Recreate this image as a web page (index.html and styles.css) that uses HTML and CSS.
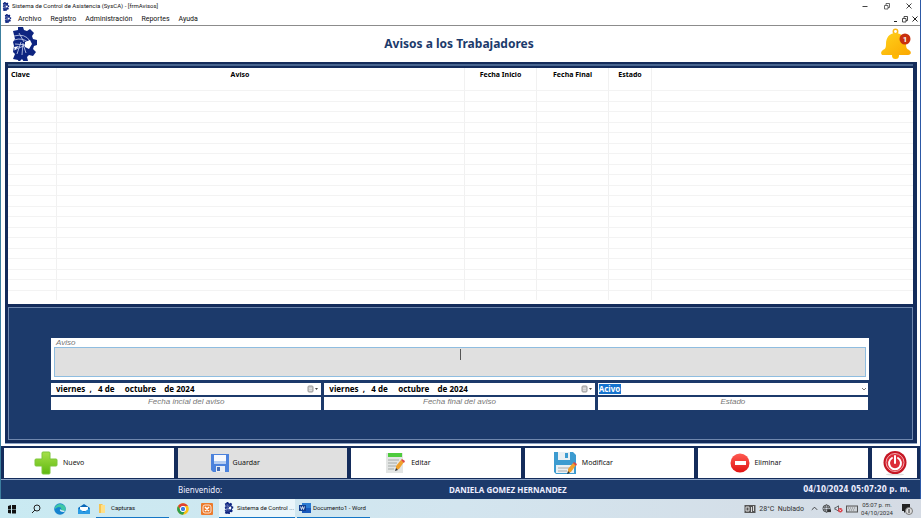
FILE: index.html
```html
<!DOCTYPE html>
<html lang="es">
<head>
<meta charset="utf-8">
<title>Sistema de Control de Asistencia (SysCA) - [frmAvisos]</title>
<link rel="stylesheet" href="styles.css">
</head>
<body>
<svg class="defs" aria-hidden="true">
  <symbol id="gear" viewBox="0 0 24 34">
    <path fill="#0d2480" d="M0 4l5-1V0h5l1 3 3 1 3-2 4 4-2 3 1 3 4 1v5l-3 1-1 3 3 3-3 4-4-1-2 2 1 4-4 1-2-3-2 2-1 2H6l-1-3-5-1 2-5-2-2 1-6-1-4 2-3z"/>
    <path fill="none" stroke="#cdd6f0" stroke-width=".8" d="M1 9q11-3 16 5M1 13q9-3 15 3M2 17l12 1M4 27l4-12M9 28l1-12M1 23l12-5M6 6l5 9M13 26l-3-9"/>
    <path fill="#fff" d="M12 15l5-2 2 4-3 5-4-2zM1 20l5-1-4 4z"/>
  </symbol>
  <symbol id="restore" viewBox="0 0 8 8"><path fill="none" stroke="currentColor" stroke-width=".8" d="M1.500 3.500h3.500v3.500h-3.500zM3 3V1.500h3.500v4H5"/></symbol>
  <symbol id="close" viewBox="0 0 8 8"><path fill="none" stroke="currentColor" d="M1.500 1.500l5 5M6.500 1.500l-5 5"/></symbol>
  <symbol id="minimize" viewBox="0 0 8 8"><path fill="none" stroke="currentColor" d="M1.500 4.500h5"/></symbol>
  <symbol id="calendar" viewBox="0 0 12 8"><rect x="1" y="1" width="5" height="6" rx="1" fill="#ccc" stroke="#999"/><path d="M2 3.500h3M2 5.500h3" stroke="#ddd"/><path fill="#444" d="M8 3h3L9.500 5z"/></symbol>
</svg>

<div class="window">
  <header class="titlebar">
    <svg class="gear-small"><use href="#gear"/></svg>
    <span class="caption">Sistema de Control de Asistencia (SysCA) - [frmAvisos]</span>
    <div class="controls">
      <button aria-label="Minimizar"><svg><use href="#minimize"/></svg></button>
      <button aria-label="Restaurar"><svg><use href="#restore"/></svg></button>
      <button aria-label="Cerrar"><svg><use href="#close"/></svg></button>
    </div>
  </header>
  <nav class="menubar">
    <svg class="gear-small"><use href="#gear"/></svg>
    <a href="#">Archivo</a><a href="#">Registro</a><a href="#">Administración</a><a href="#">Reportes</a><a href="#">Ayuda</a>
    <div class="controls child">
      <button aria-label="Minimizar ventana"><svg viewBox="0 0 8 8"><path d="M3 6.500h3" stroke="currentColor"/></svg></button>
      <button aria-label="Restaurar ventana"><svg><use href="#restore"/></svg></button>
      <button aria-label="Cerrar ventana"><svg><use href="#close"/></svg></button>
    </div>
  </nav>

  <div class="heading">
    <svg class="logo"><use href="#gear"/></svg>
    <h1>Avisos a los Trabajadores</h1>
    <button class="bell" aria-label="Notificaciones">
      <svg viewBox="0 0 30 32">
        <defs><linearGradient id="gold" x2="1" y2="1"><stop stop-color="#ffd21c"/><stop offset="1" stop-color="#fba800"/></linearGradient></defs>
        <circle cx="14.500" cy="3.500" r="2.200" fill="none" stroke="#fdb913" stroke-width="1.500"/>
        <circle cx="14.500" cy="27.500" r="3.500" fill="#ffb900"/>
        <path fill="url(#gold)" d="M14.500 5C8 5 5 10 5 16c0 4-1 5-3 6-3 2-2 5 0 5h25c3 0 4-3 1-5-2-1-3-2-3-6 0-6-4-11-10.500-11z"/>
        <circle cx="24" cy="11" r="5.500" fill="#c9300e"/>
        <text class="badge" x="24" y="14" text-anchor="middle">1</text>
      </svg>
    </button>
  </div>

  <main class="frame">
    <div class="list">
      <table>
        <colgroup><col class="c-key"><col class="c-notice"><col class="c-date"><col class="c-date"><col class="c-state"><col></colgroup>
        <thead><tr><th class="left">Clave</th><th class="notice">Aviso</th><th>Fecha Inicio</th><th>Fecha Final</th><th>Estado</th><th></th></tr></thead>
        <tbody>
          <tr><td></td><td></td><td></td><td></td><td></td><td></td></tr>
          <tr><td></td><td></td><td></td><td></td><td></td><td></td></tr>
          <tr><td></td><td></td><td></td><td></td><td></td><td></td></tr>
          <tr><td></td><td></td><td></td><td></td><td></td><td></td></tr>
          <tr><td></td><td></td><td></td><td></td><td></td><td></td></tr>
          <tr><td></td><td></td><td></td><td></td><td></td><td></td></tr>
          <tr><td></td><td></td><td></td><td></td><td></td><td></td></tr>
          <tr><td></td><td></td><td></td><td></td><td></td><td></td></tr>
          <tr><td></td><td></td><td></td><td></td><td></td><td></td></tr>
          <tr><td></td><td></td><td></td><td></td><td></td><td></td></tr>
          <tr><td></td><td></td><td></td><td></td><td></td><td></td></tr>
          <tr><td></td><td></td><td></td><td></td><td></td><td></td></tr>
          <tr><td></td><td></td><td></td><td></td><td></td><td></td></tr>
          <tr><td></td><td></td><td></td><td></td><td></td><td></td></tr>
          <tr><td></td><td></td><td></td><td></td><td></td><td></td></tr>
          <tr><td></td><td></td><td></td><td></td><td></td><td></td></tr>
          <tr><td></td><td></td><td></td><td></td><td></td><td></td></tr>
          <tr><td></td><td></td><td></td><td></td><td></td><td></td></tr>
          <tr><td></td><td></td><td></td><td></td><td></td><td></td></tr>
          <tr><td></td><td></td><td></td><td></td><td></td><td></td></tr>
          <tr><td></td><td></td><td></td><td></td><td></td><td></td></tr>
        </tbody>
      </table>
    </div>
    <form class="panel">
      <div class="group">
        <label for="aviso">Aviso</label>
        <div class="memo"><textarea id="aviso"></textarea><span class="caret"></span></div>
      </div>
      <div class="fields">
        <div class="field">
          <div class="box"><input id="inicio" type="text" value="viernes  ,   4 de     octubre    de 2024"><svg class="cal"><use href="#calendar"/></svg></div>
          <label for="inicio">Fecha incial del aviso</label>
        </div>
        <div class="field">
          <div class="box"><input id="final" type="text" value="viernes  ,   4 de     octubre    de 2024"><svg class="cal"><use href="#calendar"/></svg></div>
          <label for="final">Fecha final del aviso</label>
        </div>
        <div class="field">
          <div class="box"><select id="estado"><option>Acivo</option></select><svg class="chev" viewBox="0 0 8 8"><path fill="none" stroke="#777" d="M2 3l2 2 2-2"/></svg></div>
          <label for="estado">Estado</label>
        </div>
      </div>
    </form>
  </main>

  <div class="actions">
    <button class="action new">
      <svg viewBox="0 0 24 24"><defs><linearGradient id="green" x2="0" y2="1"><stop stop-color="#a6e04a"/><stop offset="1" stop-color="#5fb80e"/></linearGradient></defs><path fill="url(#green)" stroke="#7cc63a" d="M9 1h6q1 0 1 1v6h6q1 0 1 1v5q0 1-1 1h-6v7q0 1-1 1H9q-1 0-1-1v-7H2q-1 0-1-1V9q0-1 1-1h6V2q0-1 1-1z"/></svg>Nuevo</button>
    <button class="action save">
      <svg viewBox="0 0 20 20"><path fill="#4c82dc" d="M1 1h18v18H3l-2-2z"/><path fill="#f7f9fd" d="M4 2h12v9H4z"/><path fill="#b5cdf2" d="M4 8h12v3H4z"/><path fill="#e9edf4" d="M6 13h9v6H6z"/><path fill="#466eb6" d="M7 14h3v4H7z"/></svg>Guardar</button>
    <button class="action edit">
      <svg viewBox="0 0 20 22"><path fill="#e3e5e4" d="M1 1h17v20H1z"/><path fill="#4ecb3d" d="M3 1h14v4H3z"/><path stroke="#a4aaa8" d="M3 8h11M3 11h9M3 14h8M3 17h6"/><path fill="#f0a12d" d="M11 14l5-6 3 2-5 7-3 1z"/><path fill="#dd4643" d="M16 8l1-1 3 2-1 2z"/><path fill="#333" d="M10 19l1-3 2 2z"/></svg>Editar</button>
    <button class="action modify">
      <svg viewBox="0 0 24 24"><path fill="#3c9bd0" d="M1 1h19l3 3v19H3l-2-2z"/><path fill="#e9f0f4" d="M5 1h12v8H5zM3 14h18v8H3z"/><path fill="#3c9bd0" d="M12 2h3v5h-3z"/><path stroke="#aaa" d="M5 17h12M5 20h9"/><path fill="#f0a12d" d="M15 18l5-6 3 2-5 7-3 1z"/><path fill="#dd4643" d="M20 12l1-1 3 2-1 2z"/><path fill="#333" d="M14 23l1-3 2 2z"/></svg>Modificar</button>
    <button class="action delete">
      <svg viewBox="0 0 20 20"><defs><linearGradient id="red" x2="0" y2="1"><stop stop-color="#ff5b52"/><stop offset="1" stop-color="#e01212"/></linearGradient></defs><circle cx="10" cy="10" r="9.500" fill="url(#red)"/><path fill="#fff" d="M5 8h11v4H5z"/></svg>Eliminar</button>
    <button class="power" aria-label="Salir">
      <svg viewBox="0 0 26 26"><ellipse cx="13" cy="24.500" rx="9" ry="1" fill="#ddd"/><circle cx="13" cy="12.500" r="11.500" fill="#c51623"/><circle cx="13" cy="12.500" r="9" fill="#dc2c38" stroke="#f3a8ac"/><path fill="none" stroke="#fff" stroke-width="2" stroke-linecap="round" d="M10 8a6 6 0 1 0 6 0M13 6v7"/></svg>
    </button>
  </div>

  <footer class="status">
    <span>Bienvenido:</span><strong>DANIELA GOMEZ HERNANDEZ</strong><strong class="clock">04/10/2024 05:07:20 p. m.</strong>
  </footer>
</div>

<div class="taskbar">
  <button class="tile" aria-label="Inicio"><svg viewBox="0 0 12 12"><path fill="#111" d="M2 3l3-1v4H2zM6 2h4v4H6zM2 6.500h3v4L2 10zM6 6.500h4v4H6z"/></svg></button>
  <button class="tile" aria-label="Buscar"><svg viewBox="0 0 12 12"><circle cx="7" cy="5" r="3" fill="none" stroke="#222"/><path stroke="#222" d="M5 7l-3 3"/></svg></button>
  <button class="tile" aria-label="Edge"><svg viewBox="0 0 12 12"><circle cx="6" cy="6" r="5.800" fill="#1583cf"/><path fill="#3fc7a5" d="M1 4a5.800 5.800 0 0 1 10.800 2q0 2-3 2L7 7q1-3-2-3-2 0-4 2z"/><path fill="#dff0f8" d="M6 6q-1 3 4 3l1-1-4-1z"/></svg></button>
  <button class="tile" aria-label="Correo"><svg viewBox="0 0 12 12"><path fill="#0b68b8" d="M0 5l6-4 6 4v6H0z"/><path fill="#fff" d="M2 4h8v4H2z"/><path fill="#2b9be4" d="M0 5l6 4 6-4v6H0z"/></svg></button>
  <button class="task folder"><svg viewBox="0 0 12 12"><path fill="#f6c451" d="M3 2h3l1 1v8H3z"/><path fill="#ffdf87" d="M5 3h4v8H5z"/></svg>Capturas</button>
  <button class="tile" aria-label="Chrome"><svg viewBox="0 0 12 12"><circle cx="6" cy="6" r="5.800" fill="#fbc116"/><path fill="#df3f32" d="M1 3a5.800 5.800 0 0 1 10 0H6L4 7z"/><path fill="#2d9e4c" d="M1 3a5.800 5.800 0 0 0 5 8.800L8 8H4z"/><circle cx="6" cy="6" r="2.700" fill="#3e7de0" stroke="#fff"/></svg></button>
  <button class="tile" aria-label="XAMPP"><svg viewBox="0 0 12 12"><rect width="12" height="12" rx="1" fill="#ec7a2b"/><rect x="2" y="2" width="8" height="8" rx="2" fill="none" stroke="#fff" stroke-width=".8"/><path fill="none" stroke="#fff" stroke-width="1.500" d="M4 4l4 4M8 4L4 8"/></svg></button>
  <button class="task active"><svg><use href="#gear"/></svg>Sistema de Control ...</button>
  <button class="task word"><svg viewBox="0 0 12 12"><path fill="#2b7cd3" d="M3 1h9v5H3z"/><path fill="#185abd" d="M3 6h9v5H3z"/><path fill="#103f91" d="M0 3h7v6H0z"/><path fill="none" stroke="#fff" stroke-width=".8" d="M1.500 4.500l1 3 1-3 1 3 1-3"/></svg>Documento1 - Word</button>
  <div class="tray">
    <svg class="weather" viewBox="0 0 12 10"><rect x=".5" y="1" width="11" height="8" fill="#555"/><path stroke="#ddd" d="M2 3h3v4H2zM7.500 3v5M9.500 2v5" fill="none"/></svg>
    <span>28°C&nbsp; Nublado</span>
    <svg class="icon up" viewBox="0 0 10 10"><path fill="none" stroke="#333" d="M2 6.500l3-3 3 3"/></svg>
    <svg class="icon" viewBox="0 0 10 10"><g fill="none" stroke="#333" stroke-width=".8"><circle cx="5" cy="5" r="4"/><ellipse cx="5" cy="5" rx="1.800" ry="4"/><path d="M1 3.500h8M1 6.500h8"/></g><path fill="#333" d="M6 6h4v3H6z"/></svg>
    <svg class="icon" viewBox="0 0 10 10"><path fill="none" stroke="#333" stroke-width=".8" d="M1 4h1l3-2v6L2 6H1z"/><circle cx="7" cy="7" r="2.500" fill="#d93a45"/><path stroke="#fff" stroke-width=".7" d="M6 6l2 2M8 6L6 8"/></svg>
    <svg class="weather" viewBox="0 0 12 10"><rect x=".5" y="2" width="11" height="6" fill="#ccd1d6" stroke="#555"/><path stroke="#888" stroke-dasharray="1 1" d="M2 4h8M3 6h6"/></svg>
    <time>05:07 p. m.<br>04/10/2024</time>
    <svg class="note" viewBox="0 0 14 12"><path fill="#222" d="M2 1h8v7H6L4 10V8H2z"/><circle cx="9" cy="8" r="3.500" fill="#ddd" stroke="#777"/><path stroke="#333" d="M9 6v4"/></svg>
  </div>
</div>
</body>
</html>
```
FILE: styles.css
```css
* { box-sizing: border-box; }

:root {
  --navy: #1c3a6b;
  --deep: #142c5b;
  --rim: #8ba2c4;
  --tahoma: "Noto Sans", "Open Sans", sans-serif;
  --segoe: Roboto, "Open Sans", sans-serif;
}

html, body { height: 100%; }

body {
  margin: 0;
  display: flex;
  flex-direction: column;
  background: #fff;
  color: #111;
  font: 7px/10px var(--segoe);
}

button, input, select, textarea { margin: 0; padding: 0; border: 0; border-radius: 0; font: inherit; color: inherit; background: none; }
a { color: inherit; text-decoration: none; }
svg { display: block; flex: none; }
.defs { display: none; }

.window {
  flex: 1;
  display: flex;
  flex-direction: column;
  border-left: 1px solid #3c7f9f;
  border-right: 1px solid #2d59a6;
}

.titlebar, .menubar { display: flex; align-items: center; }
.titlebar { height: 12px; padding-left: 1px; font-size: 6px; }
.menubar { height: 14px; padding-left: 3px; border-bottom: 1px solid #8c8c8c; }
.gear-small { width: 8px; height: 9px; }
.caption { padding-left: 2px; }
.menubar a { margin-right: 9px; }
.menubar .gear-small { margin-right: 6px; }
.controls { display: flex; gap: 14px; margin-left: auto; padding-right: 7px; color: #444; }
.controls svg { width: 8px; height: 8px; }
.child { gap: 2px; padding-right: 1px; color: #222; }

.heading { display: flex; align-items: center; justify-content: space-between; height: 36px; padding: 0 9px 0 12px; }
.logo { width: 24px; height: 34px; }
.heading h1 { margin: 0; font: bold 12px/16px var(--tahoma); color: var(--navy); }
.bell svg { width: 30px; height: 32px; }
.badge { fill: #fff; font: bold 8px var(--segoe); }

.frame {
  flex: 1;
  display: flex;
  flex-direction: column;
  margin: 0 3px 2px 4px;
  padding: 2px 4px 3px 3px;
  background: var(--deep);
  border-bottom: 1px solid var(--rim);
}

.list { padding-bottom: 4px; background: #fff; border-top: 2px solid #48658f; box-shadow: inset 0 2px var(--deep); padding-top: 2px; }
table { width: 100%; border-collapse: separate; border-spacing: 0; table-layout: fixed; }
.c-key { width: 49px; }
.c-notice { width: 408px; }
.c-date { width: 72px; }
.c-state { width: 43px; }
th { height: 13px; padding: 0; font: bold 7px/10px var(--tahoma); color: #000; }
th.left { padding-left: 3px; text-align: left; }
th.notice { padding-right: 41px; }
td { height: 10px; padding: 0; border-bottom: 1px solid #f3f3f3; }
tr:nth-child(even) td { height: 11px; }
tr:last-child td { height: 9px; border-bottom: 0; }
th:not(:last-child), td:not(:last-child) { border-right: 1px solid #f1f1f1; }

.panel {
  flex: 1;
  display: flex;
  flex-direction: column;
  gap: 3px;
  margin-top: 3px;
  padding: 30px 44px 0 42px;
  background: var(--navy);
  border: 1px solid #6f87ad;
}
.group, .field label { background: #fff; color: #777; font: italic 8px/10px "Liberation Sans", sans-serif; }
.group { margin-right: -1px; padding: 0 3px 3px; }
.group label { display: block; padding-left: 2px; line-height: 9px; }
.memo { position: relative; display: flex; }
.memo textarea { flex: 1; height: 30px; resize: none; outline: 0; text-align: center; background: #e0e0e0; border: 1px solid #8fbde0; }
.caret { position: absolute; left: 50%; top: 2px; width: 1px; height: 11px; background: #555; }
.fields { display: grid; grid-template-columns: repeat(3, 1fr); gap: 3px; }
.field { display: flex; flex-direction: column; gap: 2px; }
.box { display: flex; align-items: center; height: 12px; background: #fff; }
.box input, .box select { flex: 1; min-width: 0; height: 12px; font: bold 8px/12px var(--tahoma); color: #000; outline: 0; }
.box input { padding-left: 5px; }
.box select { appearance: none; padding-left: 1px; color: #fff; background: linear-gradient(#1674cf, #1674cf) 1px 1px / 22px 10px no-repeat; }
.cal { width: 12px; height: 8px; margin-right: 2px; }
.chev { width: 8px; height: 8px; }
.field label { height: 13px; text-align: center; }

.actions {
  display: grid;
  grid-template-columns: repeat(5, 1fr) 45px;
  gap: 4px;
  padding: 2px 3px 1px;
  background: var(--deep);
  border-bottom: 1px solid var(--rim);
}
.actions button { height: 30px; background: #fff; }
.action { display: flex; align-items: center; gap: 5px; padding-left: 30px; font-family: var(--tahoma); }
.actions .save { background: #e0e0e0; padding-left: 32px; gap: 3px; }
.action.edit { padding-left: 34px; gap: 6px; }
.action.modify { padding-left: 28px; }
.action svg { width: 20px; height: 22px; }
.action.new svg, .action.modify svg { width: 24px; height: 24px; }
.action.delete { padding-left: 32px; gap: 4px; }
.power { display: grid; place-items: center; }
.power svg { width: 26px; height: 26px; }

.status {
  display: flex;
  align-items: center;
  height: 19px;
  padding: 1px 10px 0 177px;
  background: var(--navy);
  color: #eef;
  font: 8px/10px var(--tahoma);
}
.status span { width: 271px; }
.status .clock { margin-left: auto; font-family: "DejaVu Sans Condensed", var(--tahoma); }

.taskbar {
  display: flex;
  align-items: stretch;
  height: 19px;
  background: linear-gradient(90deg, #c9eaf2, #d3e5ef 50%, #d5dbe4);
  font-size: 6px;
}
.tile { width: 24px; display: grid; place-items: center; }
.tile svg, .task svg { width: 12px; height: 12px; }
.task { display: flex; align-items: center; gap: 3px; white-space: nowrap; border-bottom: 1px solid #1476c6; }
.task.folder { width: 73px; margin-right: 2px; }
.task.active { width: 76px; padding-left: 4px; gap: 2px; margin-right: 2px; background: #eaf6fb; }
.task.word { width: 73px; padding-left: 2px; gap: 2px; }
.tray { display: flex; align-items: center; gap: 3px; margin-left: auto; padding-right: 7px; font-size: 7px; color: #333; }
.up { margin-left: 3px; }
.weather { width: 12px; height: 10px; }
.icon { width: 9px; height: 9px; }
.tray time { font-size: 6px; line-height: 8px; text-align: center; }
.note { width: 14px; height: 12px; margin-left: 4px; }
```
